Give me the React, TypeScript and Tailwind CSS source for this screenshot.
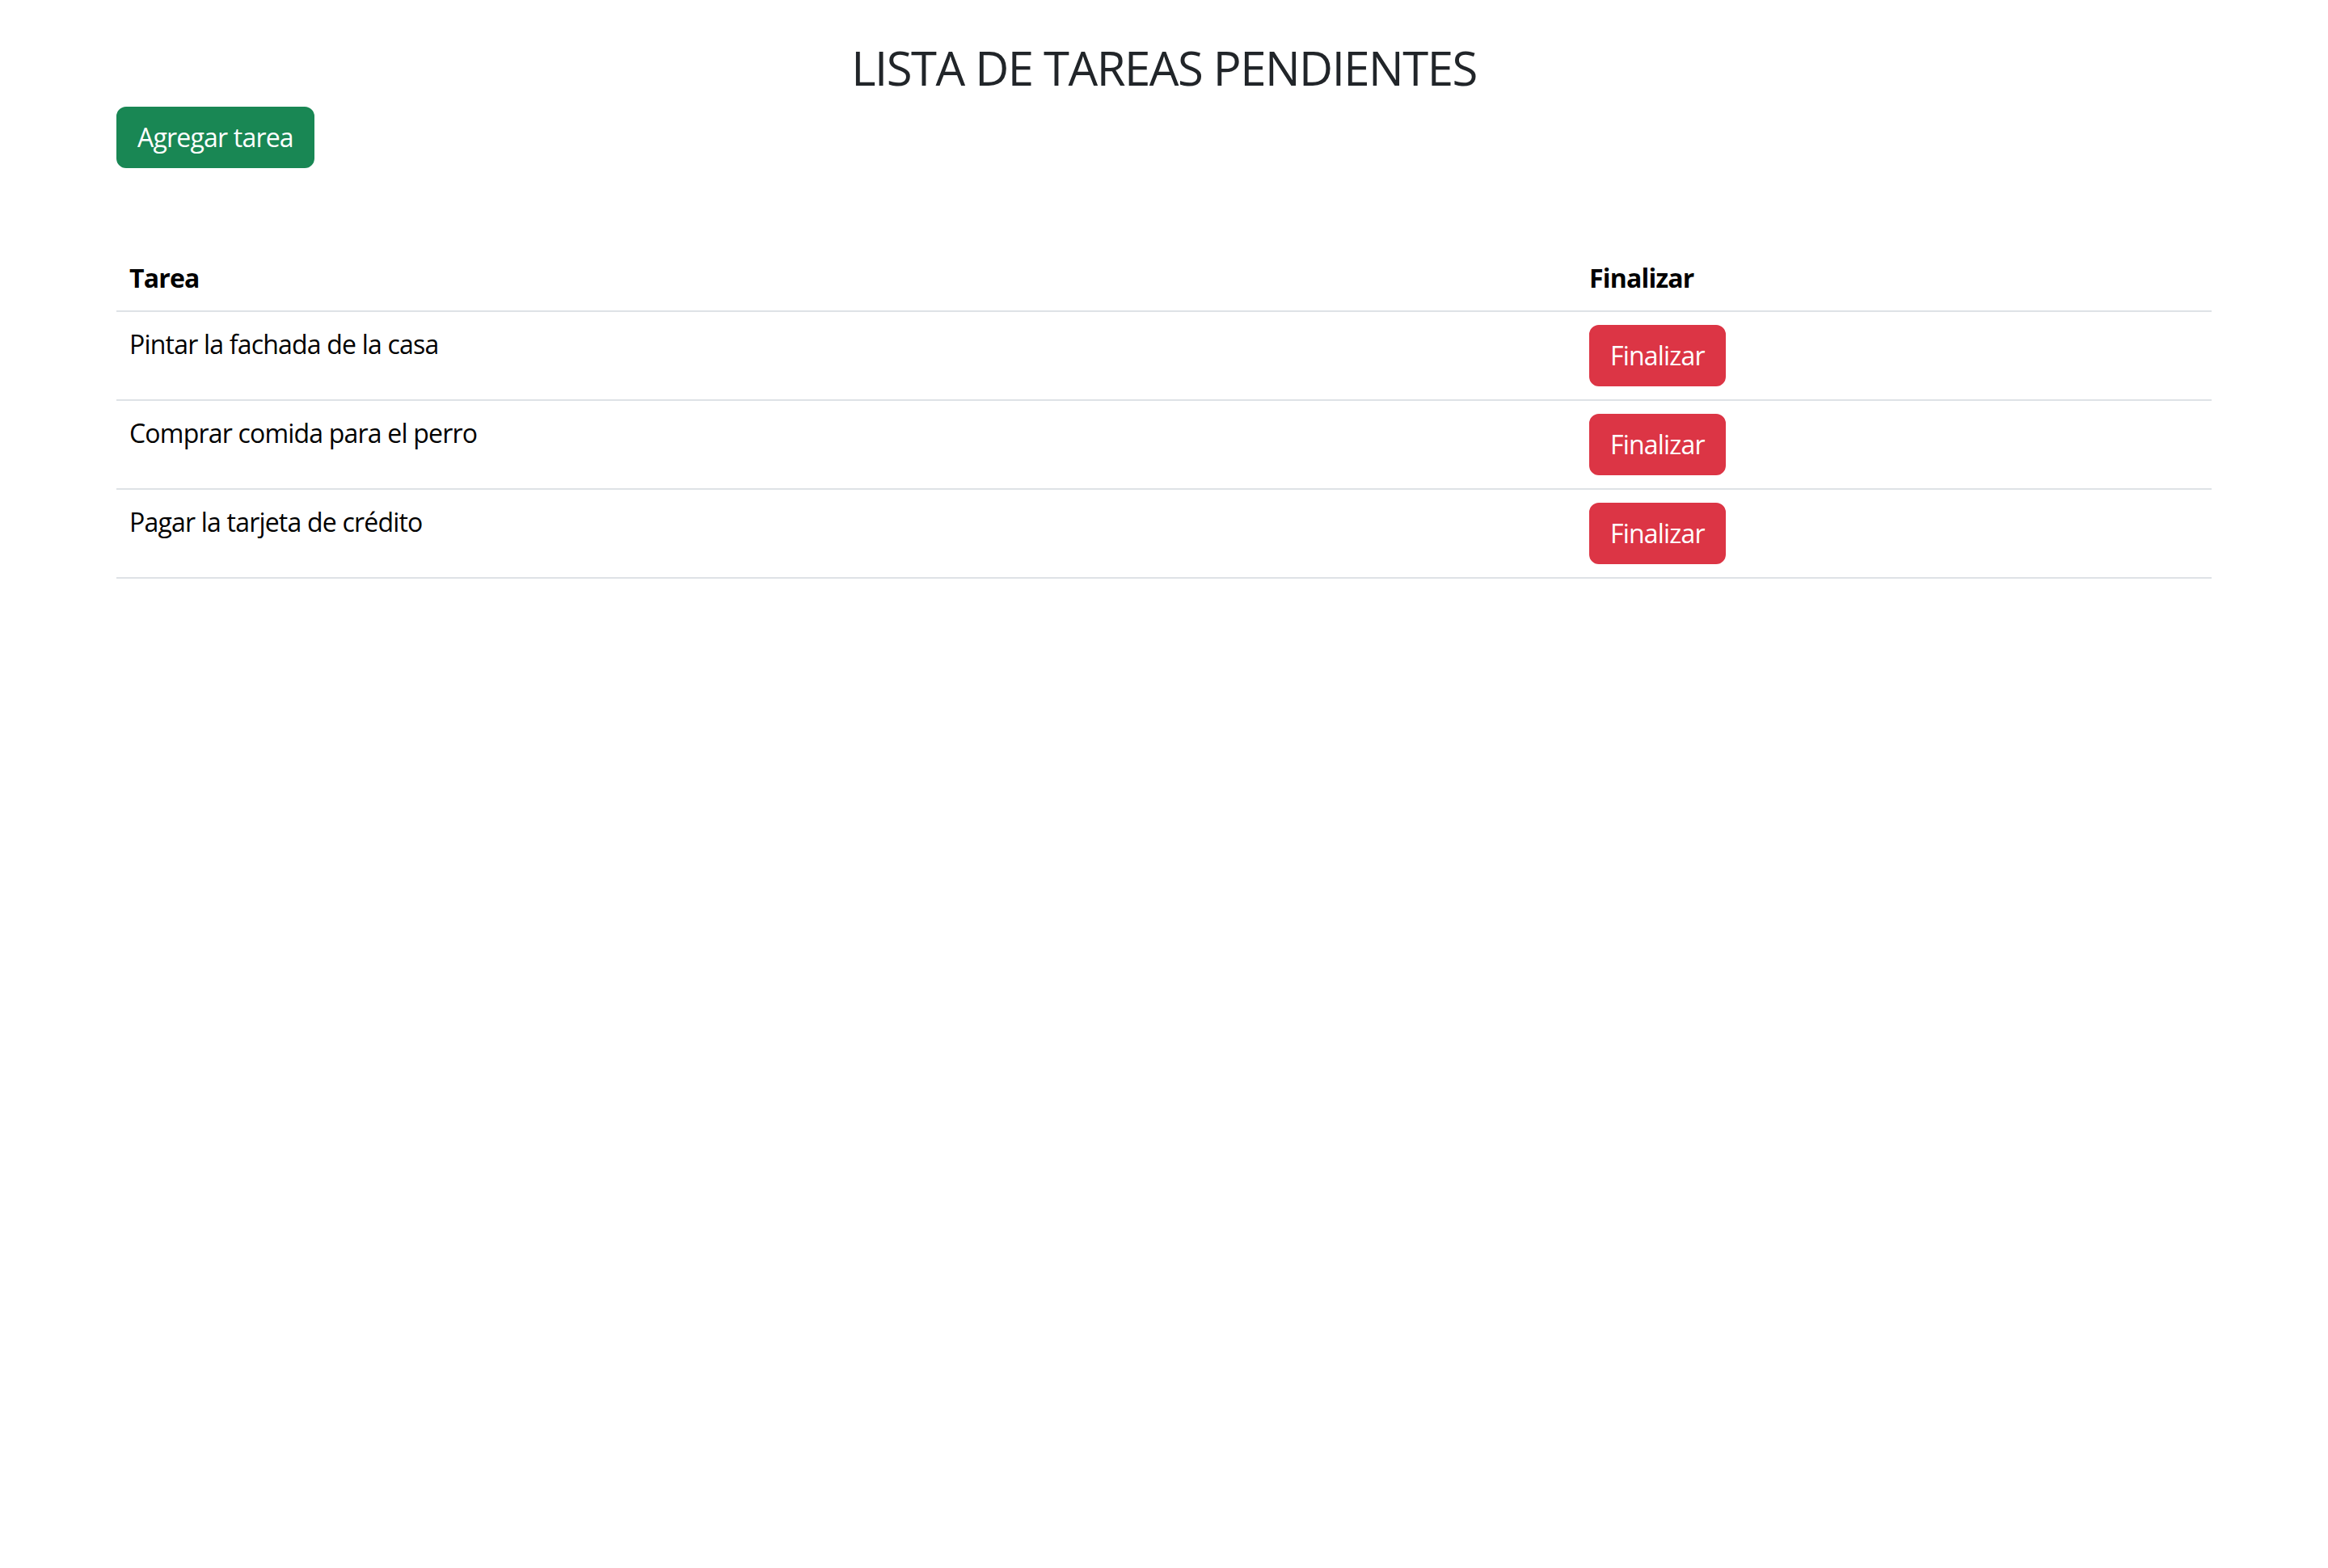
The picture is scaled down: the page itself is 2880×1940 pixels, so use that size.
// Task list page, Bootstrap-like look rendered at 2x
const tareas = [
  'Pintar la fachada de la casa',
  'Comprar comida para el perro',
  'Pagar la tarjeta de crédito',
];

export default function App() {
  return (
    <div className="min-h-screen bg-white text-[#212529] font-['Open_Sans',sans-serif] text-[32px] leading-[48px] tracking-[-0.8px]">
      <div className="mx-auto w-[2640px] px-6">
        <h3 className="mt-[49px] mb-[13px] text-center text-[58px] leading-[70px] font-medium tracking-[-1.5px]">
          LISTA DE TAREAS PENDIENTES
        </h3>
        <button className="rounded-xl border-2 border-[#198754] bg-[#198754] px-6 py-3 text-white">
          Agregar tarea
        </button>

        <table className="mt-24 w-full border-collapse text-left">
          <thead>
            <tr className="border-b-2 border-[#dee2e6]">
              <th className="w-[1806px] p-4 font-bold align-top text-black">Tarea</th>
              <th className="p-4 font-bold align-top text-black">Finalizar</th>
            </tr>
          </thead>
          <tbody>
            {tareas.map((t) => (
              <tr key={t} className="border-b-2 border-[#dee2e6]">
                <td className="p-4 align-top text-black">{t}</td>
                <td className="p-4 align-top">
                  <button className="rounded-xl border-2 border-[#dc3545] bg-[#dc3545] px-6 py-3 text-white">
                    Finalizar
                  </button>
                </td>
              </tr>
            ))}
          </tbody>
        </table>
      </div>
    </div>
  );
}
